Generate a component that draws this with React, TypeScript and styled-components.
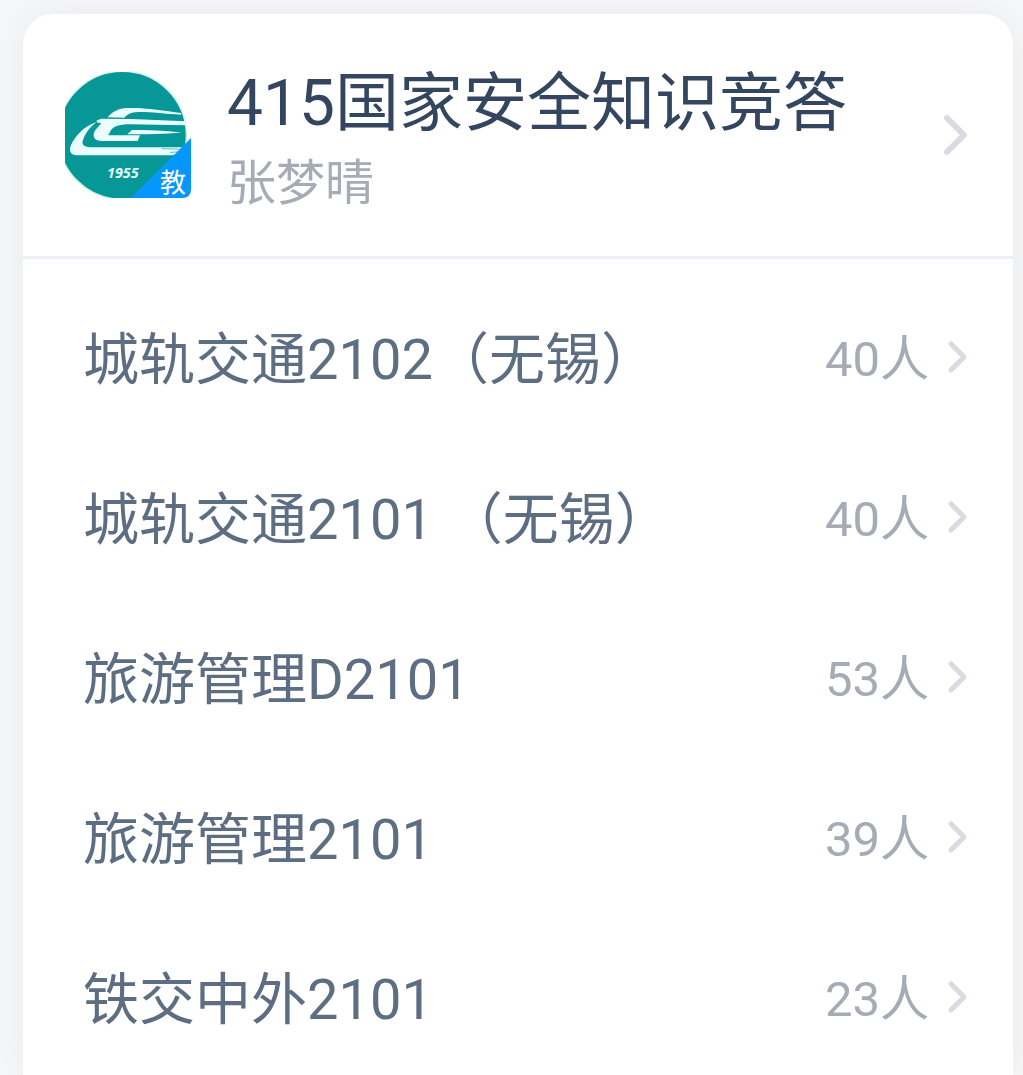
import React from 'react';
import styled, { createGlobalStyle } from 'styled-components';

const GlobalStyle = createGlobalStyle`
  *, *::before, *::after { box-sizing: border-box; }
  body {
    margin: 0;
    background: #f5f7f9;
    font-family: Roboto, "Noto Sans CJK SC", sans-serif;
  }
`;

const Page = styled.div`
  display: flex;
  min-height: 100vh;
  padding: 14px 10px 0 23px;
`;

const Card = styled.main`
  flex: 1;
  min-width: 0;
  background: #ffffff;
  border-radius: 30px 30px 0 0;
  box-shadow: 0 0 36px rgba(0, 0, 0, 0.06);
`;

const PlainButton = styled.button`
  display: flex;
  align-items: center;
  width: 100%;
  margin: 0;
  border: 0;
  background: none;
  font: inherit;
  text-align: left;
  cursor: pointer;
`;

const Header = styled(PlainButton)`
  height: 245px;
  padding: 0 44px 0 42px;
  border-bottom: 3px solid #ecf0f8;
`;

const Avatar = styled.span`
  position: relative;
  flex: none;
  width: 126px;
  height: 126px;
  border-radius: 8px;
  overflow: hidden;
`;

const Badge = styled.span`
  position: absolute;
  right: 0;
  bottom: 0;
  display: flex;
  align-items: flex-end;
  justify-content: flex-end;
  width: 60px;
  height: 60px;
  padding: 0 5px 0 0;
  background: #0596ff;
  clip-path: polygon(100% 0, 100% 100%, 0 100%);
  color: #ffffff;
  font-size: 26px;
  line-height: 30px;
`;

const Heading = styled.span`
  display: flex;
  flex: 1;
  flex-direction: column;
  min-width: 0;
  padding: 18px 0 0 36px;
`;

const Title = styled.span`
  color: #34465f;
  font-size: 64px;
  line-height: 80px;
`;

const Author = styled.span`
  color: #a6acb6;
  font-size: 49px;
  line-height: 80px;
`;

const ClassList = styled.ul`
  display: flex;
  flex-direction: column;
  gap: 40px;
  margin: 0;
  padding: 38px 0 0;
  list-style: none;
`;

const Row = styled(PlainButton)`
  height: 120px;
  padding: 0 44px 0 60px;
`;

const ClassName = styled.span`
  flex: 1;
  padding-top: 6px;
  color: #5d6d82;
  font-size: 56px;
  line-height: 80px;
  white-space: pre;
`;

const Count = styled.span`
  padding-top: 6px;
  margin-right: 18px;
  color: #a6acb6;
  font-size: 49px;
  line-height: 80px;
`;

const Arrow = styled.svg`
  flex: none;
  fill: none;
  stroke: #dadbe1;
  stroke-linecap: round;
  stroke-linejoin: round;
`;

const classes = [
  { name: '城轨交通2102（无锡）', count: 40 },
  { name: '城轨交通2101 （无锡）', count: 40 },
  { name: '旅游管理D2101', count: 53 },
  { name: '旅游管理2101', count: 39 },
  { name: '铁交中外2101', count: 23 },
];

function SchoolLogo() {
  return (
    <svg width="126" height="126" viewBox="30 30 378 378" aria-hidden="true">
      <circle cx="202" cy="220" r="192" fill="#069796" stroke="#c9f3f1" strokeWidth="4" />
      <g fill="#eafffd">
        <path d="M158 166C172 150 186 142 206 139C250 134 320 144 378 153V158C330 155 280 149 250 150C228 151 216 157 208 167Z" />
        <path d="M128 182L124 176L138 170L230 171L390 178V190L225 187C190 187 174 194 167 206L160 220H255L248 237H142C115 237 110 220 122 203L139 183Z" />
        <path d="M126 181C82 192 50 236 45 260C45 274 52 280 70 280H350L390 274V256H106C85 255 79 246 84 234C92 213 105 193 126 181Z" />
        <path d="M217 217L231 204C285 203 335 206 380 212C330 215 270 217 217 217Z" />
      </g>
      <path d="M320 260L388 262M345 271L388 269" stroke="#5dbcb9" strokeWidth="3" />
      <text
        x="156"
        y="347"
        fill="#e2fbf6"
        fontFamily="'Open Sans', sans-serif"
        fontSize="43"
        fontStyle="italic"
        fontWeight="700"
      >
        1955
      </text>
    </svg>
  );
}

export default function App() {
  return (
    <>
      <GlobalStyle />
      <Page>
        <Card>
          <Header type="button">
            <Avatar>
              <SchoolLogo />
              <Badge>教</Badge>
            </Avatar>
            <Heading>
              <Title>415国家安全知识竞答</Title>
              <Author>张梦晴</Author>
            </Heading>
            <Arrow width="26" height="42" viewBox="0 0 26 42" strokeWidth="6">
              <path d="M4 4L21 21L4 38" />
            </Arrow>
          </Header>
          <ClassList>
            {classes.map((item) => (
              <li key={item.name}>
                <Row type="button">
                  <ClassName>{item.name}</ClassName>
                  <Count>{item.count}人</Count>
                  <Arrow width="22" height="34" viewBox="0 0 22 34" strokeWidth="5">
                    <path d="M4 4L17 17L4 30" />
                  </Arrow>
                </Row>
              </li>
            ))}
          </ClassList>
        </Card>
      </Page>
    </>
  );
}
